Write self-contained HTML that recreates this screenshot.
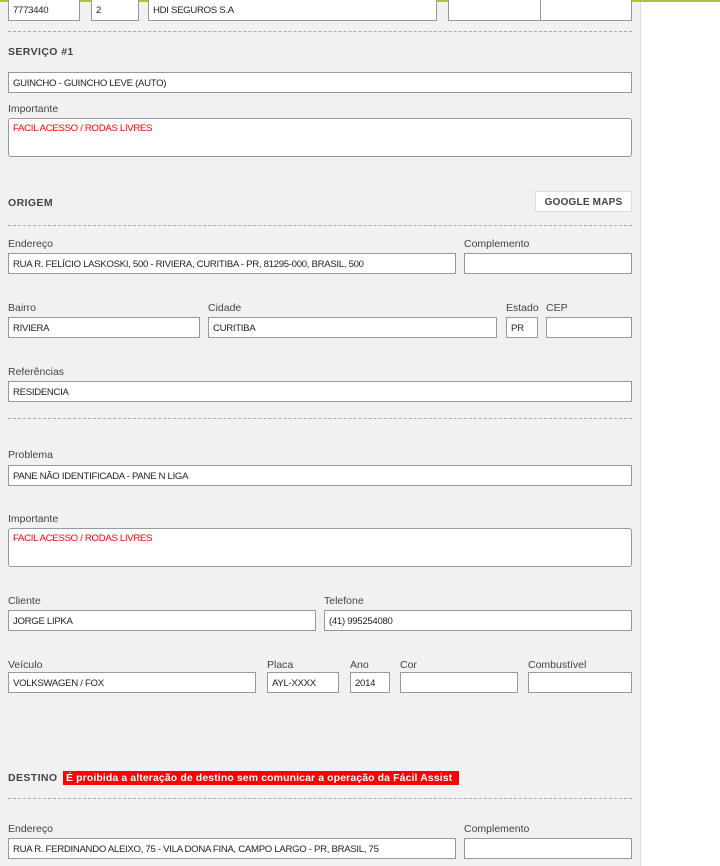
<!DOCTYPE html>
<html><head><meta charset="utf-8"><style>
body{margin:0;width:720px;height:866px;background:#fff;position:relative;overflow:hidden;font-family:"Liberation Sans",Tahoma,sans-serif}
#p{position:absolute;left:0;top:0;width:640px;height:866px;background:#f1f1f1;border-right:1px solid #ddd}
#g{position:absolute;left:0;top:0;width:720px;height:2px;background:#a8c43a}
.i{position:absolute;box-sizing:border-box;background:#fff;border:1px solid #999;font-size:9.6px;letter-spacing:-0.3px;color:#222;padding:0 4px;line-height:21px;white-space:nowrap;overflow:hidden}
.t{border-radius:3px;line-height:16px;padding-top:2px;color:#f00}
.l{position:absolute;font-size:10.5px;color:#444}
.h{position:absolute;font-size:10.5px;font-weight:bold;color:#444;letter-spacing:.4px}
.d{position:absolute;left:8px;width:624px;border-top:1px dashed #aaa}
</style></head><body>
<div id="p"></div><div id="g"></div>
<div class="i" style="left:8px;top:-1px;width:72px;height:22px">7773440</div>
<div class="i" style="left:91px;top:-1px;width:48px;height:22px">2</div>
<div class="i" style="left:148px;top:-1px;width:289px;height:22px">HDI SEGUROS S.A</div>
<div class="i" style="left:448px;top:-1px;width:93px;height:22px"></div>
<div class="i" style="left:540px;top:-1px;width:92px;height:22px"></div>
<div class="d" style="top:31px"></div>
<div class="h" style="left:8px;top:46px">SERVIÇO #1</div>
<div class="i" style="left:8px;top:72px;width:624px;height:21px">GUINCHO - GUINCHO LEVE (AUTO)</div>
<div class="l" style="left:8px;top:103px">Importante</div>
<div class="i t" style="left:8px;top:118px;width:624px;height:39px">FACIL ACESSO / RODAS LIVRES</div>
<div class="h" style="left:8px;top:197px">ORIGEM</div>
<div class="i" style="left:535px;top:191px;width:97px;height:21px;border-color:#ddd;font-weight:bold;color:#444;text-align:center;font-size:10px;letter-spacing:.2px">GOOGLE MAPS</div>
<div class="d" style="top:225px"></div>
<div class="l" style="left:8px;top:238px">Endereço</div>
<div class="l" style="left:464px;top:238px">Complemento</div>
<div class="i" style="left:8px;top:253px;width:448px;height:21px">RUA R. FELÍCIO LASKOSKI, 500 - RIVIERA, CURITIBA - PR, 81295-000, BRASIL, 500</div>
<div class="i" style="left:464px;top:253px;width:168px;height:21px"></div>
<div class="l" style="left:8px;top:302px">Bairro</div>
<div class="l" style="left:208px;top:302px">Cidade</div>
<div class="l" style="left:506px;top:302px">Estado</div>
<div class="l" style="left:546px;top:302px">CEP</div>
<div class="i" style="left:8px;top:317px;width:192px;height:21px">RIVIERA</div>
<div class="i" style="left:208px;top:317px;width:289px;height:21px">CURITIBA</div>
<div class="i" style="left:506px;top:317px;width:32px;height:21px">PR</div>
<div class="i" style="left:546px;top:317px;width:86px;height:21px"></div>
<div class="l" style="left:8px;top:366px">Referências</div>
<div class="i" style="left:8px;top:381px;width:624px;height:21px">RESIDENCIA</div>
<div class="d" style="top:418px"></div>
<div class="l" style="left:8px;top:449px">Problema</div>
<div class="i" style="left:8px;top:465px;width:624px;height:21px">PANE NÃO IDENTIFICADA - PANE N LIGA</div>
<div class="l" style="left:8px;top:513px">Importante</div>
<div class="i t" style="left:8px;top:528px;width:624px;height:39px">FACIL ACESSO / RODAS LIVRES</div>
<div class="l" style="left:8px;top:595px">Cliente</div>
<div class="l" style="left:324px;top:595px">Telefone</div>
<div class="i" style="left:8px;top:610px;width:308px;height:21px">JORGE LIPKA</div>
<div class="i" style="left:324px;top:610px;width:308px;height:21px">(41) 995254080</div>
<div class="l" style="left:8px;top:659px">Veículo</div>
<div class="l" style="left:267px;top:659px">Placa</div>
<div class="l" style="left:350px;top:659px">Ano</div>
<div class="l" style="left:400px;top:659px">Cor</div>
<div class="l" style="left:528px;top:659px">Combustível</div>
<div class="i" style="left:8px;top:672px;width:248px;height:21px">VOLKSWAGEN / FOX</div>
<div class="i" style="left:267px;top:672px;width:72px;height:21px">AYL-XXXX</div>
<div class="i" style="left:350px;top:672px;width:40px;height:21px">2014</div>
<div class="i" style="left:400px;top:672px;width:118px;height:21px"></div>
<div class="i" style="left:528px;top:672px;width:104px;height:21px"></div>
<div class="h" style="left:8px;top:772px">DESTINO</div>
<div style="position:absolute;left:63px;top:771px;width:396px;height:14px;background:#f00;color:#fff;font-size:10.5px;font-weight:bold;line-height:14px;padding-left:3px;box-sizing:border-box;white-space:nowrap;overflow:hidden;letter-spacing:.1px">É proibida a alteração de destino sem comunicar a operação da Fácil Assist</div>
<div class="d" style="top:798px"></div>
<div class="l" style="left:8px;top:823px">Endereço</div>
<div class="l" style="left:464px;top:823px">Complemento</div>
<div class="i" style="left:8px;top:838px;width:448px;height:21px">RUA R. FERDINANDO ALEIXO, 75 - VILA DONA FINA, CAMPO LARGO - PR, BRASIL, 75</div>
<div class="i" style="left:464px;top:838px;width:168px;height:21px"></div>
</body></html>
